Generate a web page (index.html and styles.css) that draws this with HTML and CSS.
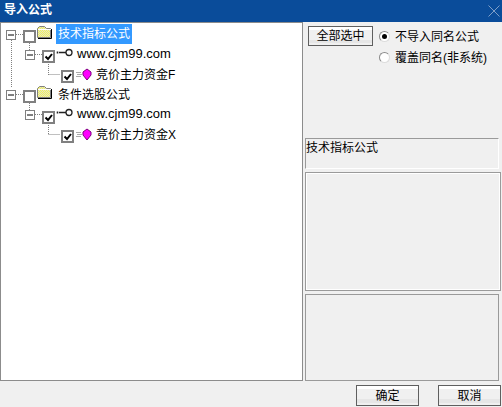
FILE: index.html
```html
<!DOCTYPE html>
<html lang="zh">
<head>
<meta charset="utf-8">
<title>导入公式</title>
<link rel="stylesheet" href="styles.css">
</head>
<body>
<svg class="defs" width="0" height="0" aria-hidden="true">
  <defs>
    <pattern id="dither" width="2" height="2" patternUnits="userSpaceOnUse">
      <rect width="2" height="2" fill="#f2f25a"/>
      <rect width="1" height="1" fill="#e4e4c8"/>
      <rect x="1" y="1" width="1" height="1" fill="#e4e4c8"/>
    </pattern>
    <g id="exp"><rect x="0.5" y="0.5" width="9" height="9" fill="#fff" stroke="#808080"/><path d="M2 5h6" stroke="#000"/></g>
    <g id="box"><rect x="1" y="1" width="11" height="11" fill="#fff" stroke="#808080" stroke-width="2"/></g>
    <g id="chk"><use href="#box"/><path d="M3.5 6.5l2.5 2.5 4-5" fill="none" stroke="#000" stroke-width="2"/></g>
    <g id="folder"><path d="M0.5 11.5v-9l2-2h5l2 2h4v9z" fill="url(#dither)" stroke="#808080"/><path d="M1 3.5h13" stroke="#fff"/><path d="M14.5 3v9.5H1" fill="none" stroke="#000"/></g>
    <g id="key"><path d="M0.5 2.5v2M2 3.5h7" stroke="#222" stroke-width="1.6"/><circle cx="12" cy="3.5" r="3" fill="#fff" stroke="#222" stroke-width="1.3"/></g>
    <g id="gem"><path d="M0 3.5h5M1 5.5h5M0 7.5h5" stroke="#aaa" stroke-width="1"/><path d="M11 0l4 3v3l-4 5-4-5v-3z" fill="#f0f" stroke="#800080"/></g>
  </defs>
</svg>
<div class="window">
  <header class="titlebar">
    <span class="title">导入公式</span>
    <svg class="close" width="12" height="12" viewBox="0 0 12 12" aria-hidden="true"><path d="M0.5 0.5l11 11M11.5 0.5l-11 11" stroke="#7f9fc8" stroke-width="1"/></svg>
  </header>
  <main class="body">
    <section class="tree">
      <div class="row">
        <svg class="glyph w-root" viewBox="1 24 55 20" aria-hidden="true">
          <path class="dots" d="M16 34.5h7M11.5 38v50M29.5 43v7"/>
          <use href="#exp" x="6" y="30"/><use href="#box" x="23" y="30"/><use href="#folder" x="37" y="26"/>
        </svg>
        <span class="label selected">技术指标公式</span>
      </div>
      <div class="row">
        <svg class="glyph w-site" viewBox="1 44 76 20" aria-hidden="true">
          <path class="dots" d="M35 54.5h7M48.5 62v13"/>
          <use href="#exp" x="25" y="50"/><use href="#chk" x="42" y="50"/><use href="#key" x="57" y="49"/>
        </svg>
        <span class="label site">www.cjm99.com</span>
      </div>
      <div class="row row-tall">
        <svg class="glyph w-leaf" viewBox="1 64 95 21" aria-hidden="true">
          <path class="dots" d="M48.5 74.5h12"/>
          <use href="#chk" x="61" y="70"/><use href="#gem" x="76" y="69"/>
        </svg>
        <span class="label">竞价主力资金F</span>
      </div>
      <div class="row row-short">
        <svg class="glyph w-root" viewBox="1 85 55 19" aria-hidden="true">
          <path class="dots" d="M16 94.5h7M29.5 103v7"/>
          <use href="#exp" x="6" y="90"/><use href="#box" x="23" y="90"/><use href="#folder" x="37" y="86"/>
        </svg>
        <span class="label label-plain">条件选股公式</span>
      </div>
      <div class="row">
        <svg class="glyph w-site" viewBox="1 104 76 20" aria-hidden="true">
          <path class="dots" d="M35 114.5h7M48.5 123v11"/>
          <use href="#exp" x="25" y="110"/><use href="#chk" x="42" y="111"/><use href="#key" x="57" y="109"/>
        </svg>
        <span class="label site">www.cjm99.com</span>
      </div>
      <div class="row row-tall">
        <svg class="glyph w-leaf" viewBox="1 124 95 21" aria-hidden="true">
          <path class="dots" d="M48.5 134.5h12"/>
          <use href="#chk" x="61" y="130"/><use href="#gem" x="76" y="129"/>
        </svg>
        <span class="label">竞价主力资金X</span>
      </div>
    </section>
    <aside class="side">
      <div class="options">
        <button class="btn btn-all" type="button">全部选中</button>
        <div class="radios">
          <label class="radio"><span class="dot on"></span>不导入同名公式</label>
          <label class="radio"><span class="dot"></span>覆盖同名(非系统)</label>
        </div>
      </div>
      <div class="panel panel-name">技术指标公式</div>
      <div class="panel panel-mid"></div>
      <div class="panel panel-low"></div>
    </aside>
  </main>
  <footer class="footer">
    <button class="btn btn-foot" type="button">确定</button>
    <button class="btn btn-foot" type="button">取消</button>
  </footer>
</div>
</body>
</html>
```
FILE: styles.css
```css
* { box-sizing: border-box; }
html, body { margin: 0; padding: 0; }
body { width: 502px; height: 407px; overflow: hidden; background: #f0f0f0; font: 12px/16px "Liberation Sans", "Noto Sans CJK SC", sans-serif; color: #000; }
.defs { position: absolute; }
.window { display: flex; flex-direction: column; height: 407px; }
.titlebar { height: 22px; flex: none; background: #0a4c9a; color: #fff; display: flex; align-items: center; justify-content: space-between; padding: 0 2px 2px 4px; }
.title { font-weight: bold; }
.close { margin-top: 2px; }
.body { flex: none; height: 359px; display: flex; }
.tree { width: 303px; height: 359px; background: #fff; border: 1px solid #8c8c8c; padding-top: 1px; flex: none; }
.row { display: flex; height: 20px; align-items: center; }
.row-tall { height: 21px; }
.row-short { height: 19px; }
.glyph { display: block; flex: none; height: 100%; overflow: visible; }
.w-root { width: 55px; }
.w-site { width: 76px; }
.w-leaf { width: 95px; }
.dots { fill: none; stroke: #808080; stroke-dasharray: 1 1; }
.label { line-height: 20px; white-space: nowrap; }
.selected { background: #3399ff; color: #fff; padding: 0 2px; }
.label-plain { padding-left: 2px; }
.site { font-size: 13px; }
.side { flex: none; width: 199px; padding-left: 2px; display: flex; flex-direction: column; }
.options { height: 116px; display: flex; align-items: flex-start; padding: 4px 0 0 3px; }
.btn { font: inherit; color: #000; border: 1px solid #5f5f5f; background: linear-gradient(#fff 0 3px, #f0f0f0 3px, #f0f0f0 70%, #e6e6e6 70%, #e6e6e6 90%, #f0f0f0 90%); padding: 0; }
.btn-all { width: 65px; height: 20px; }
.radios { margin-left: 6px; display: flex; flex-direction: column; }
.radio { display: flex; align-items: center; height: 21px; white-space: nowrap; }
.dot { width: 11px; height: 11px; border-radius: 50%; background: #fff; border: 1px solid; border-color: #8a8a8a #dcdcdc #dcdcdc #8a8a8a; margin-right: 5px; display: flex; align-items: center; justify-content: center; }
.dot.on::before { content: ""; width: 5px; height: 5px; border-radius: 50%; background: #000; }
.panel { border: 1px solid #9a9a9a; flex: none; }
.panel-name { width: 194px; height: 31px; line-height: 18px; border-right-color: #fff; border-bottom-color: #fff; }
.panel-mid { width: 196px; height: 119px; margin-top: 3px; box-shadow: inset 0 0 0 1px #fff; }
.panel-low { width: 194px; height: 87px; margin-top: 3px; }
.footer { flex: none; display: flex; justify-content: flex-end; gap: 19px; padding: 4px 1px 0 0; }
.btn-foot { width: 63px; height: 21px; }
```
